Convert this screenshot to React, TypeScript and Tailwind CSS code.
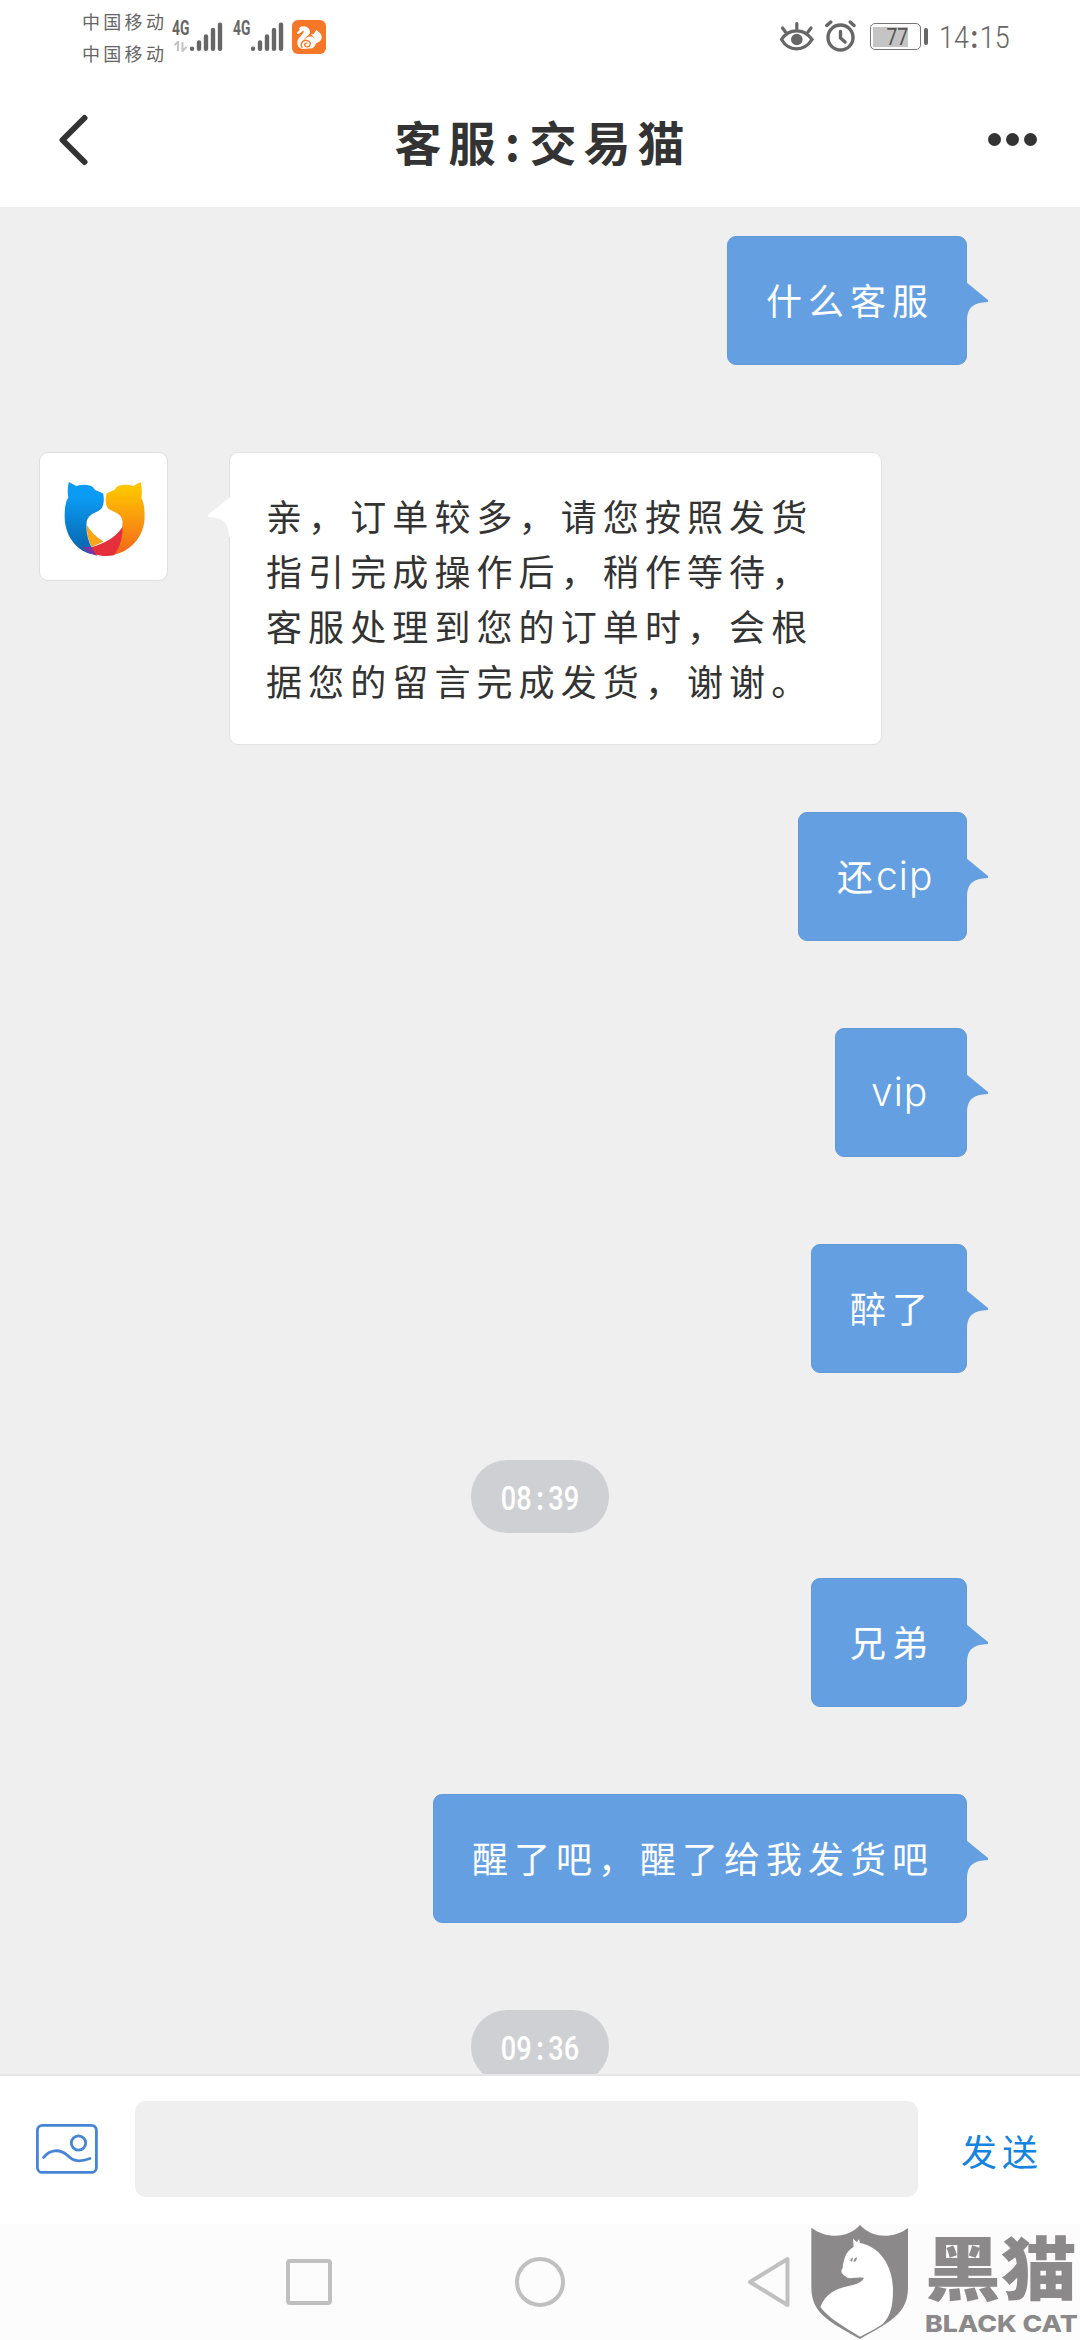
import type { ReactNode } from 'react';

type Message =
  | { kind: 'sent'; text: string; latin?: string; width: string }
  | { kind: 'received'; lines: string[] }
  | { kind: 'time'; hours: string; minutes: string; spacing: string };

const messages: Message[] = [
  { kind: 'sent', text: '什么客服', width: 'w-[240px]' },
  {
    kind: 'received',
    lines: [
      '亲，订单较多，请您按照发货',
      '指引完成操作后，稍作等待，',
      '客服处理到您的订单时，会根',
      '据您的留言完成发货，谢谢。',
    ],
  },
  { kind: 'sent', text: '还', latin: 'cip', width: 'w-[169px]' },
  { kind: 'sent', text: '', latin: 'vip', width: 'w-[132px]' },
  { kind: 'sent', text: '醉了', width: 'w-[156px]' },
  { kind: 'time', hours: '08', minutes: '39', spacing: 'mb-[45px]' },
  { kind: 'sent', text: '兄弟', width: 'w-[156px]' },
  { kind: 'sent', text: '醒了吧，醒了给我发货吧', width: 'w-[534px]' },
  { kind: 'time', hours: '09', minutes: '36', spacing: 'mb-0' },
];

function SignalBars() {
  return (
    <svg width="34" height="32" viewBox="0 0 34 32" stroke="#666" strokeWidth="4.4" strokeLinecap="round">
      <path d="M3 28.6v.2M10 22.5v6.3M17 16.5v12.3M24 10v18.8M31 4.6v24.2" />
    </svg>
  );
}

function NetworkLabel({ children }: { children?: ReactNode }) {
  return (
    <div className="flex h-8 w-[19px] flex-col items-start pl-[2px]">
      <span className="h-[17px] origin-left scale-x-[0.69] font-['Roboto','Liberation_Sans',sans-serif] text-[20px] leading-[17px] font-bold">
        4G
      </span>
      {children}
    </div>
  );
}

function StatusBar() {
  return (
    <div className="flex h-[72px] shrink-0 justify-between pr-[70px] pl-[82px] text-[#666]">
      <div className="flex">
        <div className="w-[88px] pt-[5px] text-[18px] leading-8 tracking-[3.3px] whitespace-nowrap">
          <div>中国移动</div>
          <div>中国移动</div>
        </div>
        <div className="mt-5 flex h-8 w-[61px]">
          <NetworkLabel>
            <svg className="mt-1 ml-0.5" width="13" height="11" viewBox="0 0 13 11" fill="none" stroke="#c4c4c4" strokeWidth="2">
              <path d="M0.5 4L4 1v9M8.5 1v9l4-4" />
            </svg>
          </NetworkLabel>
          <SignalBars />
        </div>
        <div className="mt-5 flex h-8 w-[61px]">
          <NetworkLabel />
          <SignalBars />
        </div>
        <svg className="mt-5" width="34" height="34" viewBox="696 60 102 102">
          <rect x="696" y="60" width="102" height="102" rx="18" fill="#f57728" />
          <path
            d="M711 102C709 93 724 94 717 85C724 73 749 78 750 96C750 106 733 112 731 122C738 110 753 104 763 115C773 126 766 140 757 145L727 147C714 144 709 130 714 119C718 109 733 101 731 93C729 88 721 103 711 102z"
            fill="#fff"
          />
          <path
            d="M752 103C763 104 765 95 769 89C774 96 785 99 785 111C785 128 768 126 764 134C770 122 762 109 752 103z"
            fill="#fff"
          />
          <path d="M727 144C718 130 731 117 743 122C757 128 750 143 738 140C730 136 735 127 742 130" fill="none" stroke="#f57728" strokeWidth="4" />
        </svg>
      </div>

      <div className="flex">
        <svg className="mt-5" width="36" height="32" viewBox="0 0 36 32" fill="none" stroke="#666" strokeWidth="3.2" strokeLinecap="round">
          <path d="M2.5 19.5C10 8 25 8 33 19.5C25 32 10 32 2.5 19.5z" />
          <circle cx="17.8" cy="19.5" r="5.8" fill="#666" stroke="none" />
          <path d="M17.8 3.5v5M3.5 8l3 4M32 8l-3 4" />
        </svg>
        <svg className="mt-5 ml-2.5" width="32" height="32" viewBox="0 0 32 32" fill="none" stroke="#666" strokeWidth="3.4" strokeLinecap="round">
          <circle cx="15.5" cy="17.5" r="12.5" />
          <path d="M15.5 11.5v6.5l4.5 4M1.8 5.5l4-3.5M29 5.5L25.2 2" />
        </svg>
        <div className="mt-[23px] ml-[13px] flex items-center gap-[3px] self-start">
          <div className="flex h-[27px] w-[51px] items-center rounded-[5px] border-[1.5px] border-[#777] pl-[2px]">
            <div className="flex h-[20px] w-[35px] items-center justify-end bg-[#c4c4c4]">
              <span className="origin-right scale-x-[0.8] font-['Roboto','Liberation_Sans',sans-serif] text-[24px] leading-5 text-[#555]">
                77
              </span>
            </div>
          </div>
          <div className="h-[17px] w-1 rounded-sm bg-[#666]" />
        </div>
        <div className="mt-[21px] ml-[11px] w-[71px]">
          <div className="flex w-[84px] origin-left scale-x-[0.84] justify-between font-['Roboto','Liberation_Sans',sans-serif] text-[32px] leading-8 font-light">
            <span>14</span>
            <span className="font-bold">:</span>
            <span>15</span>
          </div>
        </div>
      </div>
    </div>
  );
}

function Header() {
  return (
    <header className="flex h-[135px] shrink-0 items-center justify-between pr-[43px] pl-[58px] text-[#333]">
      <svg width="32" height="52" viewBox="0 0 32 52" fill="none" stroke="#333" strokeWidth="6" strokeLinecap="round" strokeLinejoin="round">
        <path d="M26.5 4L4.5 26l22 22" />
      </svg>
      <h1 className="mt-[3px] ml-2 flex text-[47px] leading-[60px] font-bold tracking-[7px]">
        <span>客服</span>
        <span className="w-[27px] text-center">:</span>
        <span>交易猫</span>
      </h1>
      <div className="flex gap-[5px]">
        <i className="size-[13px] rounded-full bg-[#333]" />
        <i className="size-[13px] rounded-full bg-[#333]" />
        <i className="size-[13px] rounded-full bg-[#333]" />
      </div>
    </header>
  );
}

function AvatarLogo() {
  return (
    <svg width="126" height="126" viewBox="59 67 383 383">
      <defs>
        <linearGradient id="blueCat" x1="0" y1="0" x2="0" y2="1">
          <stop offset="0.2" stopColor="#0a9cf5" />
          <stop offset="1" stopColor="#0a62a8" />
        </linearGradient>
        <linearGradient id="yellowCat" x1="0" y1="0" x2="0" y2="1">
          <stop offset="0.1" stopColor="#fdc400" />
          <stop offset="1" stopColor="#f4661c" />
        </linearGradient>
      </defs>
      <path d="M201 285C201 310 205 332 216 353L252 336C230 322 212 305 201 285z" fill="#f9a51a" />
      <path
        d="M147 155L169 167C188 162 210 161 221 172C226 183 242 184 251 191C255 207 253 225 246 236C233 250 210 248 201 274C198 305 204 333 218 358L214 374C166 361 133 314 134 258C134 231 137 214 145 202C142 187 143 168 147 155z"
        fill="url(#blueCat)"
      />
      <path
        d="M364 155L342 167C323 162 301 161 291 172C285 183 269 184 261 191C257 207 258 225 266 236C280 247 308 249 310 276C309 304 302 340 275 378C337 369 378 317 377 258C377 235 375 217 367 204C370 187 369 168 364 155z"
        fill="url(#yellowCat)"
      />
      <path d="M310 292C286 326 253 343 216 353L194 358C218 377 249 384 284 378C302 354 310 327 310 292z" fill="#e5303c" />
      <path d="M186 353C199 353 214 352 216 353C219 362 226 370 233 379C215 376 199 367 186 353z" fill="#7a35a5" />
    </svg>
  );
}

function SentBubble({ text, latin, width }: { text: string; latin?: string; width: string }) {
  return (
    <div className="mb-[87px] flex shrink-0 justify-end pr-[92px]">
      <div className={`flex h-[129px] items-center pb-[2px] pl-[38px] text-white ${width} rounded-[9px] border border-[#6299d7] bg-[#649fe1]`}>
        {text && <span className="text-[36px] leading-[55px] tracking-[6px] whitespace-nowrap">{text}</span>}
        {latin && (
          <span className="-ml-[3px] font-['Inter','Liberation_Sans',sans-serif] text-[39px] leading-[55px] font-light tracking-[1px]">
            {latin}
          </span>
        )}
      </div>
      <svg className="mt-[46px] -ml-px" width="22" height="40" viewBox="0 0 22 40" fill="#649fe1">
        <path d="M0 0L22 18v2C8 21 1 24 1 40H0z" />
      </svg>
    </div>
  );
}

function ReceivedBubble({ lines }: { lines: string[] }) {
  return (
    <div className="mb-[67px] flex h-[293px] shrink-0 pl-[39px]">
      <div className="size-[129px] shrink-0 rounded-[9px] border border-[#dedede] bg-white">
        <AvatarLogo />
      </div>
      <svg className="z-10 mt-[45px] -mr-px ml-[40px]" width="22" height="40" viewBox="0 0 22 40" fill="#fff">
        <path d="M22 0L0 18v2C14 21 21 24 21 40h1z" />
      </svg>
      <div className="w-[653px] rounded-[9px] border border-[#e2e2e2] bg-white pt-[35px] pl-[36px] text-[36px] leading-[55px] tracking-[6.1px] text-[#333]">
        {lines.map((line) => (
          <div key={line} className="whitespace-nowrap">
            {line}
          </div>
        ))}
      </div>
    </div>
  );
}

function TimePill({ hours, minutes, spacing }: { hours: string; minutes: string; spacing: string }) {
  return (
    <div className={`flex shrink-0 justify-center ${spacing}`}>
      <div className="flex h-[73px] w-[138px] items-center justify-center rounded-[36px] bg-[#cfd0d4] pt-[3px]">
        <div className="flex w-[98px] shrink-0 scale-x-[0.8] justify-between font-['Roboto','Liberation_Sans',sans-serif] text-[34px] leading-10 font-medium text-white">
          <span>{hours}</span>
          <span className="font-bold">:</span>
          <span>{minutes}</span>
        </div>
      </div>
    </div>
  );
}

function InputBar() {
  return (
    <div className="flex h-[150px] shrink-0 items-center border-t-2 border-[#e6e6e6] bg-white pb-[3px] pl-9">
      <svg width="62" height="50" viewBox="0 0 62 50" fill="none" stroke="#4585d3" strokeWidth="2.8" strokeLinecap="round">
        <rect x="1.4" y="1.4" width="59" height="47" rx="5" />
        <circle cx="42.5" cy="19" r="7.2" />
        <path d="M7.5 33.5C14 25 24 25 31 31C38 38 44 38 54 34.5" />
      </svg>
      <div className="ml-[37px] h-24 w-[783px] rounded-[11px] bg-[#efefef]" />
      <button type="button" className="mt-0.5 ml-[43px] text-[36px] leading-[50px] tracking-[5px] text-[#1583e0]">
        发送
      </button>
    </div>
  );
}

function NavBar() {
  return (
    <div className="flex h-[116px] shrink-0 items-center bg-[#fcfcfc] pl-[286px]">
      <div className="size-[46px] rounded-[4px] border-4 border-[#c0c0c0]" />
      <div className="ml-[183px] size-[50px] rounded-full border-4 border-[#c0c0c0]" />
      <svg className="ml-[182px]" width="44" height="52" viewBox="0 0 44 52" fill="none" stroke="#c0c0c0" strokeWidth="4" strokeLinejoin="round">
        <path d="M3 26L40.5 3v46z" />
      </svg>
    </div>
  );
}

function Watermark() {
  return (
    <div className="absolute right-0 bottom-0 flex h-[115px] w-[269px] text-[#8b898a]">
      <svg className="shrink-0" width="98" height="114" viewBox="93 75 294 342">
        <path
          d="M94 83C137 116 204 117 240 75C277 116 340 117 384 84V262C384 343 329 366 240 417C151 367 94 342 94 262z"
          fill="#8b898a"
        />
        <path
          d="M219 116L230 126L237 118L240 129C299 139 338 197 339 268C339 320 331 350 308 372C288 387 262 399 240 410C197 383 149 358 121 321C138 274 182 262 222 254C237 250 247 244 252 234C239 231 224 234 209 235C199 233 191 226 185 218C183 211 186 207 188 205C188 194 192 181 195 171C200 156 210 147 221 140z"
          fill="#fff"
        />
        <path d="M211 183C211 176 217 174 219 172L216 185zM221 186C221 176 226 174 231 172C231 180 227 185 221 186z" fill="#8b898a" />
      </svg>
      <div className="ml-[16px] w-[155px] whitespace-nowrap">
        <div className="h-[87px] w-[140px] origin-left scale-x-[1.1] text-[69px] leading-[80px] font-black">黑猫</div>
        <div className="w-[127px] origin-left scale-x-[1.16] font-['Inter','Liberation_Sans',sans-serif] text-[23px] leading-[25px] font-extrabold">
          BLACK CAT
        </div>
      </div>
    </div>
  );
}

export default function App() {
  return (
    <div className="relative flex h-[2340px] w-[1080px] flex-col overflow-hidden bg-white font-['Noto_Sans_CJK_SC',sans-serif]">
      <StatusBar />
      <Header />
      <main className="flex h-[1867px] shrink-0 flex-col overflow-hidden bg-[#efefef] pt-[29px]">
        {messages.map((message, i) => {
          if (message.kind === 'sent') {
            return <SentBubble key={i} text={message.text} latin={message.latin} width={message.width} />;
          }
          if (message.kind === 'received') {
            return <ReceivedBubble key={i} lines={message.lines} />;
          }
          return <TimePill key={i} hours={message.hours} minutes={message.minutes} spacing={message.spacing} />;
        })}
      </main>
      <InputBar />
      <NavBar />
      <Watermark />
    </div>
  );
}
